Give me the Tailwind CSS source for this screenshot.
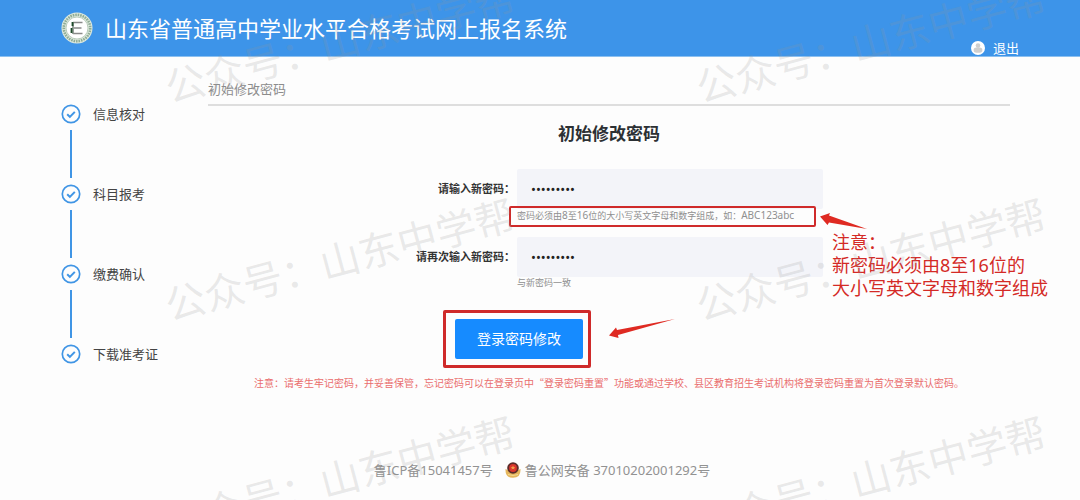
<!DOCTYPE html>
<html lang="zh-CN">
<head>
<meta charset="utf-8">
<meta name="viewport" content="width=device-width, initial-scale=1">
<title>山东省普通高中学业水平合格考试网上报名系统</title>
<script src="https://cdn.jsdelivr.net/npm/@tailwindcss/browser@4"></script>
</head>
<body class="relative min-h-screen overflow-x-hidden bg-[#fdfdfd] font-['Noto_Sans','Noto_Sans_CJK_SC',sans-serif] text-[13px] leading-5 text-[#444]">

<header class="flex h-[57px] items-center justify-between border-b border-[#8cc0f0] bg-[#3d94e9] px-[61px] text-white">
  <div class="flex items-center gap-3">
    <svg class="size-8" viewBox="0 0 32 32" aria-hidden="true">
      <circle cx="16" cy="16" r="15.500" fill="#dfeadf"/>
      <circle cx="16" cy="16" r="13.200" fill="none" stroke="#8fac95" stroke-width="2.600" stroke-dasharray="1.600 .9"/>
      <circle cx="16" cy="16" r="11" fill="#fff" stroke="#a9c0ac" stroke-width=".8"/>
      <path d="M12 10.500h9.500M13 16h7.500M12 21.500h9.500" stroke="#8a8a8a" stroke-width="1.700" fill="none"/>
      <path d="M12 10v12" stroke="#8c968e" stroke-width="1.800"/>
      <path d="M11.500 10v4M10.500 16v5" stroke="#1d4a2a" stroke-width="1.800"/>
    </svg>
    <h1 class="text-[22px] leading-8">山东省普通高中学业水平合格考试网上报名系统</h1>
  </div>
  <a href="#" class="flex items-center gap-2 self-end leading-4">
    <svg class="size-[14px]" viewBox="0 0 14 14" aria-hidden="true">
      <circle cx="7" cy="7" r="7" fill="#fff"/>
      <circle cx="7" cy="4.600" r="2.300" fill="#cfcfcf"/>
      <rect x="2.600" y="6.400" width="8.800" height="5.400" rx="2.700" fill="#cfcfcf"/>
    </svg>
    <span>退出</span>
  </a>
</header>

<div class="flex pr-[70px] pl-[61px]">
  <ol class="flex w-[147px] shrink-0 flex-col gap-[6px] pt-[47px]">
    <li class="flex flex-col gap-[6px]">
      <div class="flex items-center gap-3"><svg class="size-5" viewBox="0 0 20 20" fill="none" stroke="#4095e5" stroke-width="1.700" aria-hidden="true"><circle cx="10" cy="10" r="8.700"/><path d="M6.200 10.200l2.700 2.700 4.900-5" stroke-width="2"/></svg>信息核对</div>
      <span class="ml-[9px] h-12 w-[2px] bg-[#4095e5]"></span>
    </li>
    <li class="flex flex-col gap-[6px]">
      <div class="flex items-center gap-3"><svg class="size-5" viewBox="0 0 20 20" fill="none" stroke="#4095e5" stroke-width="1.700" aria-hidden="true"><circle cx="10" cy="10" r="8.700"/><path d="M6.200 10.200l2.700 2.700 4.900-5" stroke-width="2"/></svg>科目报考</div>
      <span class="ml-[9px] h-12 w-[2px] bg-[#4095e5]"></span>
    </li>
    <li class="flex flex-col gap-[6px]">
      <div class="flex items-center gap-3"><svg class="size-5" viewBox="0 0 20 20" fill="none" stroke="#4095e5" stroke-width="1.700" aria-hidden="true"><circle cx="10" cy="10" r="8.700"/><path d="M6.200 10.200l2.700 2.700 4.900-5" stroke-width="2"/></svg>缴费确认</div>
      <span class="ml-[9px] h-12 w-[2px] bg-[#4095e5]"></span>
    </li>
    <li class="flex items-center gap-3"><svg class="size-5" viewBox="0 0 20 20" fill="none" stroke="#4095e5" stroke-width="1.700" aria-hidden="true"><circle cx="10" cy="10" r="8.700"/><path d="M6.200 10.200l2.700 2.700 4.900-5" stroke-width="2"/></svg>下载准考证</li>
  </ol>

  <main class="min-w-0 flex-1">
    <p class="border-b-2 border-[#dedede] pt-[22px] pb-[5px] text-[#8c8c8c]">初始修改密码</p>
    <h2 class="pt-4 text-center text-[17px] leading-6 font-bold text-[#2c3034]">初始修改密码</h2>

    <form class="flex flex-col items-center pt-[23px]">
      <div class="grid grid-cols-[108px_306px] gap-x-[2px] gap-y-2 pl-3">
        <label for="pw" class="flex h-10 items-center justify-end text-[11px] font-bold whitespace-nowrap text-[#333]">请输入新密码：</label>
        <div>
          <input id="pw" type="password" value="Abcd12345" class="block h-10 w-full rounded-xs bg-[#f3f4f9] px-[14px] text-[13px] text-[#222]">
          <div class="relative h-5">
            <p class="text-[9px] leading-3 whitespace-nowrap text-[#8f8f8f]">密码必须由<span class="text-[10px]">8</span>至<span class="text-[10px]">16</span>位的大小写英文字母和数字组成，如：<span class="text-[10px]">ABC123abc</span></p>
            <span class="absolute -top-[3px] -left-2 h-[21px] w-[307px] rounded-xs border-2 border-[#cf2a2a]"></span>
            <div class="absolute top-1 left-[303px] w-[240px] text-[18px] leading-[23px] text-[#d42a26]">
              <svg class="h-[18px] w-12" viewBox="0 0 48 18" fill="#df2a22" aria-hidden="true"><path d="M0 3.500L10 0L9 2.500L47 16L9 9.500L7.500 12Z"/></svg>
              <p class="pl-3">注意：<br>新密码必须由8至16位的<br>大小写英文字母和数字组成</p>
            </div>
          </div>
        </div>
        <label for="pw2" class="flex h-10 items-center justify-end text-[11px] font-bold whitespace-nowrap text-[#333]">请再次输入新密码：</label>
        <div>
          <input id="pw2" type="password" value="Abcd12345" class="block h-10 w-full rounded-xs bg-[#f3f4f9] px-[14px] text-[13px] text-[#222]">
          <p class="text-[9px] leading-3 text-[#8f8f8f]">与新密码一致</p>
        </div>
      </div>

      <div class="relative mt-[21px] mr-[184px] rounded-xs border-3 border-[#cf2a2a] py-[6px] pr-[5px] pl-[9px]">
        <button type="button" class="block h-10 w-32 rounded-xs bg-[#168bff] text-[14px] text-white">登录密码修改</button>
        <svg class="absolute top-[6px] left-[163px] h-5 w-[66px]" viewBox="0 0 66 20" fill="#df2a22" aria-hidden="true"><path d="M0 16.500L7 8.500L8 11L66 0L9 16L9.500 19Z"/></svg>
      </div>
    </form>

    <p class="pt-[9px] text-center text-[10px] leading-3 text-[#ea6e6e] font-['Noto_Sans_CJK_SC',sans-serif]">注意：请考生牢记密码，并妥善保管，忘记密码可以在登录页中“登录密码重置”功能或通过学校、县区教育招生考试机构将登录密码重置为首次登录默认密码。</p>
  </main>
</div>

<footer class="flex items-center justify-center gap-3 pt-[71px] pl-1 text-[#929292]">
  <a href="#">鲁ICP备15041457号</a>
  <a href="#" class="flex items-center gap-1">
    <svg class="size-4" viewBox="0 0 16 16" aria-hidden="true">
      <path d="M.5 7Q3 9 8 9t7.500-2Q16 15.800 8 15.800T.5 7Z" fill="#e5b65c"/>
      <circle cx="8" cy="6" r="5.800" fill="#5a2b28"/>
      <circle cx="8" cy="6" r="3.900" fill="#d9352c"/>
      <path d="M8 3.500l.7 1.500h1.600l-1.200 1 .4 1.500L8 6.700l-1.500.8.4-1.500-1.200-1h1.600Z" fill="#f3a04a"/>
      <path d="M3 12.500q5 2 10 0" stroke="#f6da90" fill="none"/>
    </svg>
    <span>鲁公网安备 37010202001292号</span>
  </a>
</footer>

<div class="pointer-events-none absolute inset-0 overflow-hidden text-[40px] leading-none whitespace-nowrap text-[#969696]/20 select-none" aria-hidden="true">
  <span class="absolute top-[22px] left-[160px] -rotate-15">公众号：山东中学帮</span>
  <span class="absolute top-[22px] left-[691px] -rotate-15">公众号：山东中学帮</span>
  <span class="absolute top-[240px] left-[160px] -rotate-15">公众号：山东中学帮</span>
  <span class="absolute top-[240px] left-[691px] -rotate-15">公众号：山东中学帮</span>
  <span class="absolute top-[458px] left-[160px] -rotate-15">公众号：山东中学帮</span>
  <span class="absolute top-[458px] left-[691px] -rotate-15">公众号：山东中学帮</span>
</div>
</body>
</html>
